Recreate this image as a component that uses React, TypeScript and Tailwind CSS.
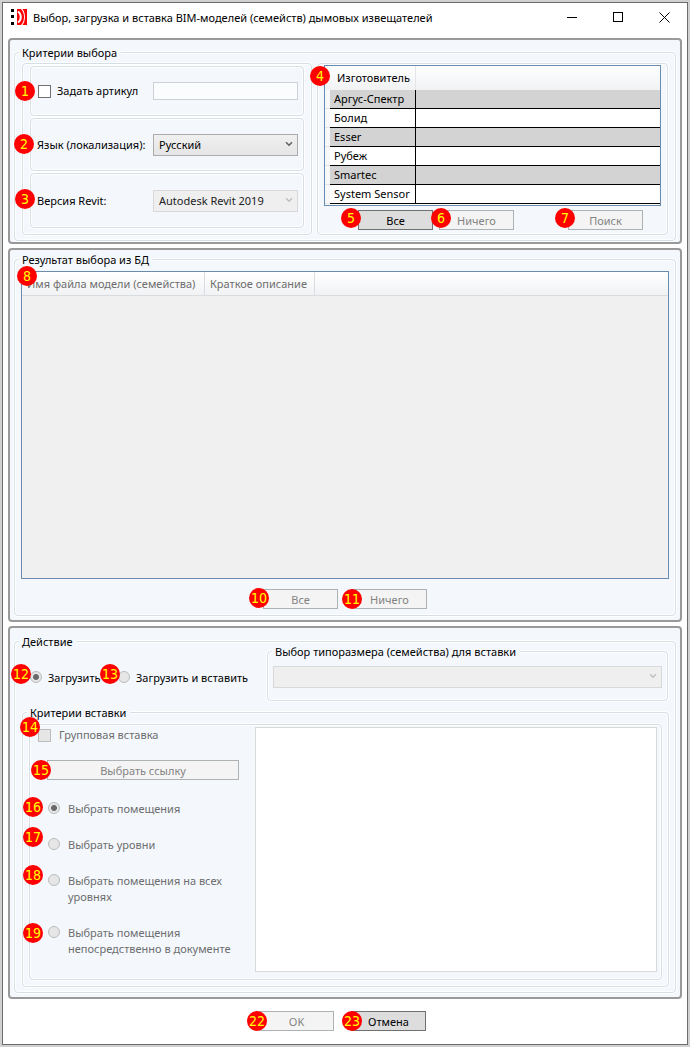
import React from "react";
import { clsx } from "clsx";

const MANUFACTURERS = ["Аргус-Спектр", "Болид", "Esser", "Рубеж", "Smartec", "System Sensor"];

const FRAME = "min-w-0 rounded border border-[#d5dfe5] shadow-[0_0_0_1px_#fff,inset_0_0_0_1px_#fff]";

function Badge({ n, at }: { n: number; at: string }) {
  return (
    <span
      className={clsx(
        "pointer-events-none absolute z-10 flex size-5 items-center justify-center rounded-full bg-[#ff0000] font-['DejaVu_Sans_Condensed','DejaVu_Sans',sans-serif] text-[14px] leading-5 text-[#ffff00]",
        at,
      )}
    >
      {n}
    </span>
  );
}

function Panel({ className, children }: { className?: string; children: React.ReactNode }) {
  return (
    <section className={clsx("mx-[5px] rounded border-2 border-[#999999] bg-[#f4f8fd] px-1", className)}>
      {children}
    </section>
  );
}

function Group({ title, className, children }: { title: string; className?: string; children: React.ReactNode }) {
  return (
    <fieldset className={clsx(FRAME, className)}>
      <legend className="ml-1 h-4 bg-[#f4f8fd] pr-1 pl-[3px] leading-[17px]">{title}</legend>
      {children}
    </fieldset>
  );
}

function PushButton({
  children,
  disabled,
  badge,
  at,
  width = "w-[75px]",
}: {
  children: React.ReactNode;
  disabled?: boolean;
  badge: number;
  at: string;
  width?: string;
}) {
  return (
    <div className={clsx("relative", width)}>
      <button
        type="button"
        disabled={disabled}
        className="block h-5 w-full border border-[#707070] bg-[#dddddd] text-center leading-[19px] disabled:border-[#adb2b5] disabled:bg-[#f4f4f4] disabled:text-[#838383]"
      >
        {children}
      </button>
      <Badge n={badge} at={at} />
    </div>
  );
}

function Combo({
  id,
  label,
  value,
  disabled,
  className,
}: {
  id: string;
  label?: string;
  value: string;
  disabled?: boolean;
  className: string;
}) {
  return (
    <div className={clsx("relative", className)}>
      <select
        id={id}
        aria-label={label}
        disabled={disabled}
        defaultValue={value}
        className="block h-[22px] w-full appearance-none border border-[#acacac] bg-linear-to-b from-[#f0f0f0] to-[#e5e5e5] pr-5 pl-[5px] leading-5 text-black disabled:border-[#d9d9d9] disabled:from-[#efefef] disabled:to-[#efefef] disabled:text-[#222222] disabled:opacity-100"
      >
        <option value={value}>{value}</option>
      </select>
      <svg
        viewBox="0 0 8 6"
        className={clsx(
          "pointer-events-none absolute top-[7px] right-[5px] h-[6px] w-2",
          disabled ? "text-[#bfbfbf]" : "text-[#606060]",
        )}
        fill="none"
        stroke="currentColor"
        strokeWidth="1.5"
      >
        <path d="M1 1.2 4 4.2 7 1.2" />
      </svg>
    </div>
  );
}

function Radio({
  name,
  badge,
  at,
  checked,
  gap = "gap-2",
  className,
  children,
}: {
  name: string;
  badge: number;
  at: string;
  checked?: boolean;
  gap?: string;
  className?: string;
  children: React.ReactNode;
}) {
  return (
    <label className={clsx("relative flex items-start leading-4", gap, className)}>
      <input
        type="radio"
        name={name}
        disabled
        defaultChecked={checked}
        className="mt-px size-3 shrink-0 appearance-none rounded-full border border-[#bcbcbc] bg-[#e6e6e6] checked:bg-[radial-gradient(circle,#6a6a6a_0_2.5px,#e6e6e6_3.5px)]"
      />
      <span>{children}</span>
      <Badge n={badge} at={at} />
    </label>
  );
}

function TitleBar() {
  return (
    <header className="flex h-[35px] items-start">
      <svg viewBox="0 0 18 18" className="mt-[5px] ml-[7px] size-[18px] shrink-0">
        <path fill="#000" d="M1 1h3v3H1zM1 7h3v3H1zM1 14h3v3H1z" />
        <path fill="#ff0000" d="M7 1h10v16H7z" />
        <path fill="none" stroke="#fff" strokeWidth="2" d="M8 3.500C11.700 6 11.700 12 8 14.500" />
        <path fill="#fff" d="M11 1C15 5 15 13 11 17H12.500C15.800 13 15.800 5 12.500 1z" />
      </svg>
      <h1 className="ml-[5px] h-7 grow truncate leading-[29px]">
        Выбор, загрузка и вставка BIM-моделей (семейств) дымовых извещателей
      </h1>
      <div className="flex">
        <button type="button" aria-label="Свернуть" className="flex h-[29px] w-[46px] items-center justify-center">
          <svg viewBox="0 0 11 11" className="size-[11px]" stroke="#000" shapeRendering="crispEdges">
            <path d="M0 5.500H10" />
          </svg>
        </button>
        <button type="button" aria-label="Развернуть" className="flex h-[29px] w-[46px] items-center justify-center">
          <svg viewBox="0 0 11 11" className="size-[11px]" fill="none" stroke="#000" shapeRendering="crispEdges">
            <path d="M.5.5h9v9h-9z" />
          </svg>
        </button>
        <button type="button" aria-label="Закрыть" className="flex h-[29px] w-[46px] items-center justify-center">
          <svg viewBox="0 0 11 11" className="size-[11px]" stroke="#000">
            <path d="M.5.5l10 10M10.500.5l-10 10" />
          </svg>
        </button>
      </div>
    </header>
  );
}

function ManufacturerTable() {
  return (
    <div className="relative">
      <div className="h-[141px] overflow-hidden border border-[#688caf] bg-white">
        <table className="w-full table-fixed border-separate border-spacing-0 text-left">
          <colgroup>
            <col className="w-[5px]" />
            <col className="w-[86px]" />
            <col />
          </colgroup>
          <thead>
            <tr className="h-6 bg-linear-to-b from-white to-[#f1f2f4]">
              <td className="p-0" />
              <th scope="col" className="border-r border-[#e3e5e8] p-0 pl-[7px] leading-6 font-normal">
                Изготовитель
              </th>
              <td className="p-0" />
            </tr>
          </thead>
          <tbody>
            {MANUFACTURERS.map((name) => (
              <tr key={name} className="h-[19px] odd:bg-[#d3d3d3] even:bg-white">
                <td className="border-b border-[#e3e5e8] bg-[#f7f8fa] p-0" />
                <td className="border-r border-b border-black p-0 pl-1 leading-[18px] whitespace-nowrap">{name}</td>
                <td className="border-b border-black p-0" />
              </tr>
            ))}
          </tbody>
        </table>
      </div>
      <Badge n={4} at="-left-[14px] top-px" />
    </div>
  );
}

function SelectionCriteria() {
  return (
    <Panel className="pt-1 pb-px">
      <Group title="Критерии выбора">
        <div className="flex gap-[5px] px-[7px] pt-[3px] pb-[5px]">
          <div className={clsx(FRAME, "flex w-[290px] shrink-0 flex-col gap-[2px] px-[7px] pt-[2px] pb-[6px]")}>
            <div className={clsx(FRAME, "relative flex h-[50px] items-center pr-[5px] pl-[7px]")}>
              <Badge n={1} at="-left-4 top-[14px]" />
              <label className="flex items-center gap-[6px]">
                <input type="checkbox" className="size-[13px] appearance-none border border-[#707070] bg-white" />
                Задать артикул
              </label>
              <input
                type="text"
                aria-label="Артикул"
                disabled
                className="ml-auto h-[18px] w-[145px] border border-[#cdd1d6] bg-[#fafcfe] px-1"
              />
            </div>
            <div className={clsx(FRAME, "relative flex h-[53px] items-center pr-[5px] pl-[6px]")}>
              <Badge n={2} at="-left-[17px] top-[15px]" />
              <label htmlFor="language" className="whitespace-nowrap">
                Язык (локализация):
              </label>
              <Combo id="language" value="Русский" className="ml-auto w-[145px] shrink-0" />
            </div>
            <div className={clsx(FRAME, "relative flex h-[55px] items-center pr-[5px] pl-[6px]")}>
              <Badge n={3} at="-left-4 top-[15px]" />
              <label htmlFor="revit">Версия Revit:</label>
              <Combo id="revit" value="Autodesk Revit 2019" disabled className="ml-auto w-[145px] shrink-0" />
            </div>
          </div>
          <div className={clsx(FRAME, "grow px-[6px] pt-px pb-1")}>
            <ManufacturerTable />
            <div className="mt-1 flex gap-[6px] pr-[18px] pl-[34px]">
              <PushButton badge={5} at="-left-[17px] -top-[2px]">Все</PushButton>
              <PushButton badge={6} at="-left-2 -top-[2px]" disabled>Ничего</PushButton>
              <div className="ml-auto">
                <PushButton badge={7} at="-left-[13px] -top-[2px]" disabled>Поиск</PushButton>
              </div>
            </div>
          </div>
        </div>
      </Group>
    </Panel>
  );
}

function Results() {
  return (
    <Panel className="mt-1 flex grow flex-col pt-px pb-1">
      <Group title="Результат выбора из БД" className="grow">
        <div className="px-[6px] pt-1 pb-[6px]">
          <div className="relative">
            <div className="h-[308px] overflow-hidden border border-[#688caf] bg-[#f0f0f0]">
              <table className="w-full table-fixed border-separate border-spacing-0 text-left text-[#6d6d6d]">
                <colgroup>
                  <col className="w-[183px]" />
                  <col className="w-[110px]" />
                  <col />
                </colgroup>
                <thead>
                  <tr className="h-6 bg-linear-to-b from-white to-[#f1f2f4]">
                    <th scope="col" className="border-r border-b border-[#d9dce0] p-0 pl-[5px] font-normal whitespace-nowrap">
                      Имя файла модели (семейства)
                    </th>
                    <th scope="col" className="border-r border-b border-[#d9dce0] p-0 pl-[5px] font-normal whitespace-nowrap">
                      Краткое описание
                    </th>
                    <td className="border-b border-[#d9dce0] p-0" />
                  </tr>
                </thead>
              </table>
            </div>
            <Badge n={8} at="-left-1 -top-[5px]" />
          </div>
          <div className="mt-[10px] flex justify-center gap-[14px]">
            <PushButton badge={10} at="-left-[14px] -top-px" disabled>Все</PushButton>
            <PushButton badge={11} at="-left-[10px] top-0" disabled>Ничего</PushButton>
          </div>
        </div>
      </Group>
    </Panel>
  );
}

function Actions() {
  return (
    <Panel className="mt-1 pt-[5px] pb-1">
      <Group title="Действие">
        <div className="pr-[6px] pb-[5px] pl-[7px]">
          <div className="-mt-[6px] flex pr-px">
            <div className="flex w-[245px] shrink-0 pt-[27px] pl-2">
              <Radio name="action" badge={12} at="-left-[19px] -top-[6px]" gap="gap-[6px]" className="w-[88px]" checked>
                Загрузить
              </Radio>
              <Radio name="action" badge={13} at="-left-[18px] -top-[6px]" gap="gap-[6px]">
                Загрузить и вставить
              </Radio>
            </div>
            <Group title="Выбор типоразмера (семейства) для вставки" className="grow">
              <div className="px-[5px] pt-[7px] pb-3">
                <Combo id="family-type" label="Типоразмер" value="" disabled className="w-full" />
              </div>
            </Group>
          </div>
          <Group title="Критерии вставки" className="mt-[3px]">
            <div className="px-[6px] pt-1 pb-[6px]">
              <div className={clsx(FRAME, "flex pt-[2px] pr-1 pb-[7px] text-[#6d6d6d]")}>
                <div className="w-[225px] shrink-0 pl-2">
                  <label className="relative flex h-4 items-center gap-2">
                    <input
                      type="checkbox"
                      disabled
                      className="size-[13px] appearance-none border border-[#bcbcbc] bg-[#e6e6e6]"
                    />
                    Групповая вставка
                    <Badge n={14} at="-left-[18px] -top-[10px]" />
                  </label>
                  <div className="mt-[17px] pr-4 pl-[9px]">
                    <PushButton badge={15} at="-left-4 top-0" width="w-full" disabled>Выбрать ссылку</PushButton>
                  </div>
                  <div className="mt-[21px] flex flex-col gap-5 pr-1 pl-[10px]">
                    <Radio name="scope" badge={16} at="-left-[25px] -top-1" checked>Выбрать помещения</Radio>
                    <Radio name="scope" badge={17} at="-left-[25px] -top-[10px]">Выбрать уровни</Radio>
                    <Radio name="scope" badge={18} at="-left-[25px] -top-2" className="w-[190px]">
                      Выбрать помещения на всех уровнях
                    </Radio>
                    <Radio name="scope" badge={19} at="-left-[25px] -top-[2px]">
                      Выбрать помещения непосредственно в документе
                    </Radio>
                  </div>
                </div>
                <div className="min-h-[245px] grow border border-[#d9d9d9] bg-white" />
              </div>
            </div>
          </Group>
        </div>
      </Group>
    </Panel>
  );
}

export default function App() {
  return (
    <div className="flex min-h-screen flex-col bg-[#d0d0d0] p-[2px] font-['Noto_Sans','Open_Sans',sans-serif] text-[11px] leading-4 text-black">
      <main className="flex grow flex-col border border-[#6b6b6b] bg-white">
        <TitleBar />
        <SelectionCriteria />
        <Results />
        <Actions />
        <footer className="mt-3 mb-[13px] flex justify-center gap-[17px] pr-[5px]">
          <PushButton badge={22} at="-left-3 top-0" disabled>OK</PushButton>
          <PushButton badge={23} at="-left-[9px] top-0">Отмена</PushButton>
        </footer>
      </main>
    </div>
  );
}
